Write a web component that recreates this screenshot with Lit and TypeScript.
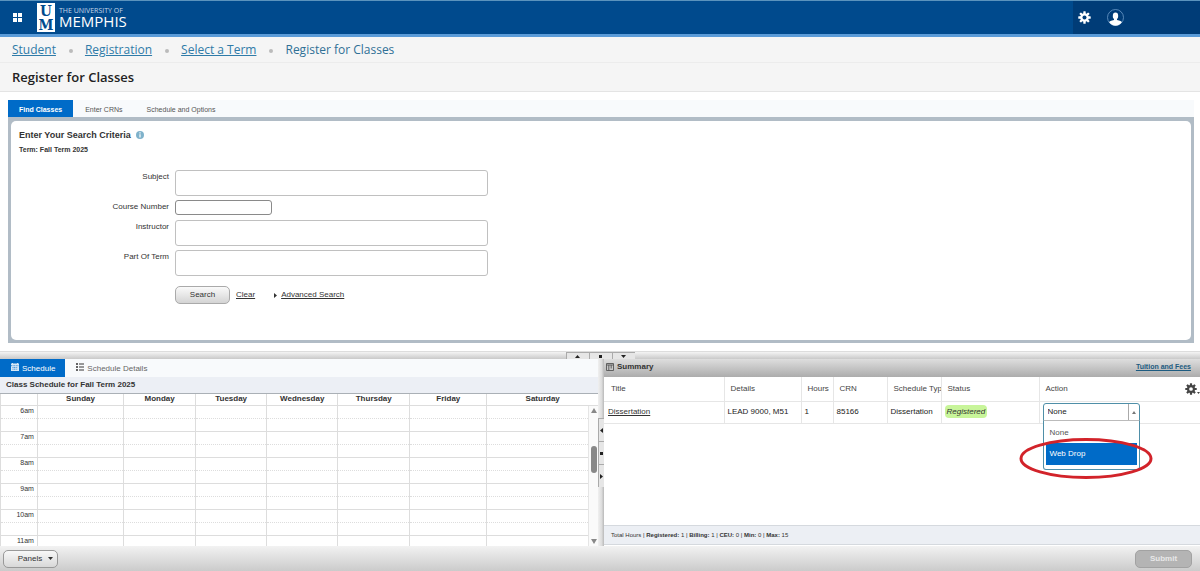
import { LitElement, html, css, svg } from "lit";
import { customElement, property, state } from "lit/decorators.js";
import { classMap } from "lit/directives/class-map.js";

const gear = (cls: string) => html`
  <svg class=${cls} viewBox="0 0 24 24" aria-hidden="true">
    ${[0, 45, 90, 135].map((a) => svg`<rect x="9.8" y="0.5" width="4.4" height="23" rx="1" transform="rotate(${a} 12 12)" fill="currentColor"></rect>`)}
    <circle cx="12" cy="12" r="6" fill="none" stroke="currentColor" stroke-width="4"></circle>
    <circle class="hole" cx="12" cy="12" r="3.7"></circle>
  </svg>
`;

@customElement("app-header")
export class AppHeader extends LitElement {
  static styles = css`
    :host {
      display: flex;
      height: 37px;
      box-sizing: border-box;
      border-top: 1px solid #5b93bd;
      border-bottom: 3px solid #5a9bd8;
      background: #004a8d;
      color: #fff;
    }
    button {
      border: 0;
      padding: 0;
      background: none;
      color: inherit;
      display: flex;
    }
    .left {
      flex: 1;
      display: flex;
      align-items: center;
      padding-left: 13px;
    }
    .apps svg {
      width: 9px;
      height: 9px;
    }
    .brand {
      display: flex;
      align-items: center;
      gap: 4px;
      margin-left: 15px;
      color: #fff;
      text-decoration: none;
    }
    .mark {
      width: 18px;
      height: 29px;
    }
    .mark text {
      font: 700 15px "DejaVu Serif Condensed", "DejaVu Serif", serif;
      fill: #004a8d;
      text-anchor: middle;
    }
    .words {
      display: flex;
      flex-direction: column;
      font-family: "Open Sans", sans-serif;
    }
    .small {
      font-size: 7px;
      line-height: 8px;
      color: #c5d6e8;
    }
    .big {
      font-size: 15px;
      line-height: 13px;
    }
    .right {
      width: 127px;
      background: #003c77;
      display: flex;
      align-items: center;
      gap: 16px;
      padding-left: 5px;
      box-sizing: border-box;
    }
    .gear {
      width: 13px;
      height: 13px;
    }
    .hole {
      fill: #003c77;
    }
    .user {
      width: 17px;
      height: 17px;
    }
  `;
  render() {
    return html`
      <div class="left">
        <button class="apps" aria-label="Applications">
          <svg viewBox="0 0 9 9" fill="#fff">
            <rect width="4" height="4"></rect><rect x="5" width="4" height="4"></rect>
            <rect y="5" width="4" height="4"></rect><rect x="5" y="5" width="4" height="4"></rect>
          </svg>
        </button>
        <a class="brand" href="#">
          <svg class="mark" viewBox="0 0 18 29" aria-hidden="true">
            <rect width="18" height="29" fill="#fff"></rect>
            <text x="9" y="13">U</text>
            <text x="9" y="27">M</text>
          </svg>
          <span class="words"><span class="small">THE UNIVERSITY OF</span><span class="big">MEMPHIS</span></span>
        </a>
      </div>
      <div class="right">
        <button aria-label="Settings">${gear("gear")}</button>
        <button aria-label="Profile">
          <svg class="user" viewBox="0 0 17 17">
            <circle cx="8.5" cy="8.5" r="8" fill="#003c77" stroke="#6d9cc9" stroke-width="0.8"></circle>
            <ellipse cx="8.5" cy="7" rx="2.7" ry="3.4" fill="#fff"></ellipse>
            <path d="M7 9h3v2c3 .5 4.500 1.200 4.800 2.300a7.600 7.600 0 0 1-12.600 0C2.500 12.200 4 11.500 7 11z" fill="#fff"></path>
          </svg>
        </button>
      </div>
    `;
  }
}

@customElement("search-panel")
export class SearchPanel extends LitElement {
  @state() private active = 0;
  static styles = css`
    :host {
      display: block;
      padding: 8px 6px 8px 8px;
      font-size: 8px;
      line-height: 10px;
    }
    button,
    input {
      font: inherit;
      color: inherit;
      box-sizing: border-box;
    }
    .tabs {
      display: flex;
      background: #f8fafc;
      height: 17px;
    }
    .tab {
      border: 0;
      background: none;
      padding: 3px 12px 0;
      font-size: 7px;
      color: #555;
    }
    .tab.on {
      background: #006bc8;
      color: #fff;
      font-weight: 700;
      padding: 3px 11px 0;
    }
    .frame {
      background: #b1bcc6;
      padding: 4px 3px 3px;
    }
    .body {
      background: #fff;
      border-radius: 5px;
      padding: 8px 8px 36px;
    }
    h2 {
      margin: 0;
      font-size: 9px;
      line-height: 12px;
      display: flex;
      align-items: center;
      gap: 5px;
    }
    .info {
      width: 8px;
      height: 8px;
    }
    .term {
      font-size: 7px;
      font-weight: 700;
      margin: 4px 0 15px;
    }
    .form {
      display: grid;
      grid-template-columns: 150px minmax(0, 313px);
      gap: 5px 6px;
    }
    label {
      text-align: right;
      padding-top: 2px;
    }
    input {
      height: 26px;
      width: 100%;
      border: 1px solid #c0c0c0;
      border-radius: 3px;
      margin-bottom: -1px;
    }
    input.short {
      width: 97px;
      height: 15px;
      border-color: #8a8a8a;
      margin: 0;
    }
    .actions {
      grid-column: 2;
      display: flex;
      align-items: center;
      margin-top: 6px;
    }
    .search {
      width: 55px;
      height: 18px;
      border: 1px solid #aaa;
      border-radius: 5px;
      background: linear-gradient(#fafafa, #d4d4d4);
      margin-right: 6px;
      padding: 0;
    }
    a {
      color: #333;
    }
    .adv {
      margin-left: 19px;
      display: flex;
      align-items: center;
      gap: 4px;
    }
    .adv svg {
      width: 3px;
      height: 5px;
    }
  `;
  render() {
    const field = (id: string, text: string, short = false) => html`
      <label for=${id}>${text}</label>
      <input id=${id} type="text" class=${classMap({ short })} />
    `;
    return html`
      <div class="tabs" role="tablist">
        ${["Find Classes", "Enter CRNs", "Schedule and Options"].map(
          (t, i) => html`<button role="tab" aria-selected=${i === this.active} class=${classMap({ tab: true, on: i === this.active })}
            @click=${() => (this.active = i)}>${t}</button>`,
        )}
      </div>
      <div class="frame">
        <div class="body">
          <h2>
            Enter Your Search Criteria
            <svg class="info" viewBox="0 0 8 8" aria-hidden="true">
              <circle cx="4" cy="4" r="4" fill="#7fb2cb"></circle>
              <path d="M4 1.300v1.200M4 3.200v3.300" stroke="#fff" stroke-width="1.200"></path>
            </svg>
          </h2>
          <div class="term">Term: Fall Term 2025</div>
          <div class="form">
            ${field("subject", "Subject")} ${field("course", "Course Number", true)}
            ${field("instructor", "Instructor")} ${field("part", "Part Of Term")}
            <div class="actions">
              <button class="search">Search</button>
              <a href="#">Clear</a>
              <span class="adv">
                <svg viewBox="0 0 3 5" aria-hidden="true"><path d="M0 0l3 2.500L0 5z" fill="#333"></path></svg>
                <a href="#">Advanced Search</a>
              </span>
            </div>
          </div>
        </div>
      </div>
    `;
  }
}

@customElement("pane-splitter")
export class PaneSplitter extends LitElement {
  @property({ type: Boolean, reflect: true }) vertical = false;
  static styles = css`
    :host {
      display: flex;
      justify-content: center;
      height: 8px;
      box-sizing: border-box;
      border-top: 1px solid #ddd;
      background: linear-gradient(#f4f4f4, #c9c9c9);
    }
    :host([vertical]) {
      height: auto;
      flex-direction: column;
      border: 0;
      background: linear-gradient(90deg, #f0f0f0, #ddd 60%, #b9b9b9);
    }
    button {
      width: 23px;
      height: 7px;
      padding: 0;
      border: solid #aaa;
      border-width: 1px 0 0 1px;
      background: #e6e6e6;
      display: flex;
      align-items: center;
      justify-content: center;
    }
    :host([vertical]) button {
      width: 6px;
      height: 23px;
    }
    svg {
      width: 5px;
      height: 5px;
      fill: #222;
      flex: none;
    }
  `;
  render() {
    const paths = this.vertical
      ? ["M4 0v5L1 2.500z", "M1 1h3v3H1z", "M1 0v5l3-2.500z"]
      : ["M0 4h5L2.500 1z", "M1 1h3v3H1z", "M0 1h5L2.500 4z"];
    const names = ["Collapse", "Reset", "Expand"];
    return html`${paths.map((d, i) => html`<button aria-label=${names[i]}><svg viewBox="0 0 5 5"><path d=${d}></path></svg></button>`)}`;
  }
}

@customElement("schedule-pane")
export class SchedulePane extends LitElement {
  static styles = css`
    :host {
      display: flex;
      flex-direction: column;
      min-height: 0;
      min-width: 0;
      background: #fff;
      font-size: 8px;
      line-height: 10px;
    }
    .tabs {
      display: flex;
      height: 18px;
      flex: none;
      background: #f8fafc;
    }
    .tab {
      font: inherit;
      border: 0;
      background: none;
      color: #666;
      display: flex;
      align-items: center;
      gap: 3px;
      padding: 2px 10px 0 11px;
    }
    .tab.on {
      background: #006bc8;
      color: #fff;
    }
    .tab svg {
      width: 8px;
      height: 8px;
      margin-bottom: 4px;
    }
    h3 {
      margin: 0;
      flex: none;
      height: 16px;
      font-size: 8px;
      line-height: 16px;
      padding-left: 6px;
      background: #eceff5;
      border-bottom: 1px solid #aab0b6;
    }
    table {
      width: 100%;
      border-collapse: collapse;
      table-layout: fixed;
    }
    th,
    td {
      padding: 0;
      height: 12px;
      border: 0 solid #ddd;
      border-width: 0 0 1px 1px;
      vertical-align: top;
    }
    .head {
      flex: none;
      padding-right: 10px;
    }
    .head th {
      height: 11px;
    }
    .hour td,
    .hour th {
      border-bottom: 1px dotted #ddd;
    }
    .hour th {
      font-size: 7px;
      font-weight: 400;
      text-align: right;
      padding-right: 3px;
    }
    .scroller {
      flex: 1 1 0;
      min-height: 0;
      display: flex;
    }
    .view {
      flex: 1;
      overflow: hidden;
      min-width: 0;
    }
    .bar {
      width: 9px;
      border-left: 1px solid #e5e5e5;
      background: #fafafa;
      display: flex;
      flex-direction: column;
      align-items: center;
      padding: 2px 0;
    }
    .bar svg {
      width: 6px;
      height: 5px;
      flex: none;
      fill: #888;
    }
    .track {
      flex: 1;
      padding-top: 33px;
    }
    .thumb {
      width: 6px;
      height: 27px;
      border-radius: 3px;
      background: #888;
    }
  `;
  render() {
    const days = ["Sunday", "Monday", "Tuesday", "Wednesday", "Thursday", "Friday", "Saturday"];
    const hours = ["6am", "7am", "8am", "9am", "10am", "11am"];
    const cols = html`<colgroup>${[37, 86, 72, 71, 71, 72, 77, 102].map((w) => html`<col style="width:${(w / 588) * 100}%" />`)}</colgroup>`;
    const headCols = html`<colgroup>${[37, 86, 72, 71, 71, 72, 77, 111].map((w) => html`<col style="width:${(w / 597) * 100}%" />`)}</colgroup>`;
    return html`
      <div class="tabs" role="tablist">
        <button class="tab on" role="tab">
          <svg viewBox="0 0 8 8" aria-hidden="true">
            <path d="M0 1h8v7H0zM1.500 0v2M6.500 0v2" fill="#d7e8f6" stroke="#d7e8f6"></path>
            <path d="M0 2.700h8M1.500 4.500h5M1.500 6.200h5" stroke="#006bc8" stroke-width=".7" stroke-dasharray="1 .6"></path>
          </svg>
          Schedule
        </button>
        <button class="tab" role="tab">
          <svg viewBox="0 0 8 8" aria-hidden="true">
            <path d="M0 1h2M0 4h2M0 7h2" stroke="#333" stroke-width="1.600"></path>
            <path d="M3 1h5M3 4h5M3 7h5" stroke="#777" stroke-width="1.500"></path>
          </svg>
          Schedule Details
        </button>
      </div>
      <h3>Class Schedule for Fall Term 2025</h3>
      <table class="head">${headCols}<thead><tr><th></th>${days.map((d) => html`<th scope="col">${d}</th>`)}</tr></thead></table>
      <div class="scroller">
        <div class="view">
          <table>
            ${cols}
            <tbody>
              ${hours.map(
                (h) => html`
                  <tr class="hour"><th scope="row">${h}</th>${days.map(() => html`<td></td>`)}</tr>
                  <tr class="half"><td></td>${days.map(() => html`<td></td>`)}</tr>
                `,
              )}
            </tbody>
          </table>
        </div>
        <div class="bar">
          <svg viewBox="0 0 6 5"><path d="M0 5h6L3 0z"></path></svg>
          <div class="track"><div class="thumb"></div></div>
          <svg viewBox="0 0 6 5"><path d="M0 0h6L3 5z"></path></svg>
        </div>
      </div>
    `;
  }
}

@customElement("summary-pane")
export class SummaryPane extends LitElement {
  static styles = css`
    :host {
      display: flex;
      flex-direction: column;
      min-width: 0;
      background: #fff;
      font-size: 8px;
      line-height: 10px;
    }
    .title {
      display: flex;
      align-items: center;
      height: 18px;
      box-sizing: border-box;
      padding: 0 9px 2px 2px;
      gap: 3px;
      background: linear-gradient(#dedede, #acacac);
    }
    .title h3 {
      flex: 1;
      margin: 0;
      font-size: 8px;
    }
    .title svg {
      width: 8px;
      height: 8px;
    }
    .title a {
      font-size: 7px;
      font-weight: 700;
      color: #1d5b80;
    }
    table {
      width: 100%;
      table-layout: fixed;
      border-collapse: collapse;
    }
    th,
    td {
      box-sizing: border-box;
      border: solid #e6e6e6;
      border-width: 0 0 1px 1px;
      text-align: left;
      white-space: nowrap;
      vertical-align: middle;
    }
    th {
      height: 24px;
      padding: 0 0 0 6px;
      font-weight: 400;
      overflow: hidden;
      color: #444;
    }
    td {
      height: 22px;
      padding: 0 0 0 3px;
      color: #222;
    }
    th:first-child,
    td:first-child {
      border-left: 0;
      padding-left: 7px;
    }
    td:first-child {
      padding-left: 4px;
    }
    td a {
      color: #333;
    }
    .last {
      display: flex;
      align-items: center;
      justify-content: space-between;
    }
    .cfg {
      border: 0;
      background: none;
      padding: 0;
      display: flex;
      align-items: flex-end;
      color: #444;
    }
    .gear {
      width: 12px;
      height: 12px;
    }
    .hole {
      fill: #fff;
    }
    .dot {
      width: 3px;
      height: 4px;
    }
    .badge {
      background: #c8f59a;
      border-radius: 4px;
      padding: 2px;
      font-style: italic;
      color: #333;
    }
    .combo {
      position: relative;
      width: 97px;
    }
    select {
      display: block;
      appearance: none;
      box-sizing: border-box;
      width: 100%;
      height: 18px;
      border: 1px solid #4f8fa8;
      border-radius: 3px 3px 0 0;
      padding: 0 4px;
      background: #fff;
      font: inherit;
      color: #222;
    }
    .arrow {
      position: absolute;
      right: 1px;
      top: 1px;
      width: 10px;
      height: 16px;
      border-left: 1px solid #aaa;
      display: flex;
      align-items: center;
      justify-content: center;
      pointer-events: none;
    }
    .arrow svg {
      width: 4px;
      height: 3px;
    }
    .menu {
      position: absolute;
      top: 17px;
      left: 0;
      right: 0;
      margin: 0;
      padding: 4px 2px;
      list-style: none;
      background: #fff;
      border: 1px solid #4f8fa8;
      border-top-color: #bbb;
      border-radius: 0 0 3px 3px;
    }
    .menu li {
      padding: 0 4px;
      line-height: 21px;
      height: 22px;
      color: #555;
    }
    .menu li:first-child {
      height: 18px;
      line-height: 15px;
    }
    .menu .on {
      background: #006bc8;
      color: #fff;
    }
    .ring {
      position: absolute;
      left: -24px;
      top: 34px;
      width: 134px;
      height: 43px;
      pointer-events: none;
    }
    .totals {
      margin-top: auto;
      margin-bottom: 1px;
      border: solid #d5d9de;
      border-width: 1px 0;
      background: #eceff4;
      font-size: 6px;
      line-height: 18px;
      padding-left: 7px;
    }
  `;
  render() {
    const heads = ["Title", "Details", "Hours", "CRN", "Schedule Type", "Status"];
    return html`
      <div class="title">
        <svg viewBox="0 0 8 8" aria-hidden="true">
          <path d="M.5.5h7v7h-7zM.5 2h7M2.800 2v5.500M5.200 2v3.500" fill="#c8c8c8" stroke="#555" stroke-width=".9"></path>
        </svg>
        <h3>Summary</h3>
        <a href="#">Tuition and Fees</a>
      </div>
      <table>
        <colgroup>${[120, 77, 32, 54, 54, 98, 161].map((w) => html`<col style="width:${(w / 596) * 100}%" />`)}</colgroup>
        <thead>
          <tr>
            ${heads.map((h) => html`<th scope="col">${h}</th>`)}
            <th scope="col">
              <div class="last">Action
                <button class="cfg" aria-label="Columns">${gear("gear")}<svg class="dot" viewBox="0 0 3 4"><path d="M0 1h3L1.500 3z" fill="#444"></path></svg></button>
              </div>
            </th>
          </tr>
        </thead>
        <tbody>
          <tr>
            <td><a href="#">Dissertation</a></td>
            <td>LEAD 9000, M51</td>
            <td>1</td>
            <td>85166</td>
            <td>Dissertation</td>
            <td><span class="badge">Registered</span></td>
            <td>
              <div class="combo">
                <select aria-label="Action"><option>None</option><option>Web Drop</option></select>
                <span class="arrow"><svg viewBox="0 0 4 3"><path d="M0 3h4L2 0z" fill="#777"></path></svg></span>
                <ul class="menu"><li>None</li><li class="on">Web Drop</li></ul>
                <svg class="ring" viewBox="0 0 134 43" aria-hidden="true">
                  <ellipse cx="67" cy="21.500" rx="65" ry="19" fill="none" stroke="#d2232a" stroke-width="3"></ellipse>
                </svg>
              </div>
            </td>
          </tr>
        </tbody>
      </table>
      <div class="totals">
        Total Hours | <b>Registered:</b> 1 | <b>Billing:</b> 1 | <b>CEU:</b> 0 | <b>Min:</b> 0 | <b>Max:</b> 15
      </div>
    `;
  }
}

@customElement("app-root")
export class AppRoot extends LitElement {
  static styles = css`
    :host {
      display: flex;
      flex-direction: column;
      min-height: 100vh;
      background: #fff;
      color: #333;
      font-family: "Liberation Sans", Arial, sans-serif;
    }
    .crumbs {
      display: flex;
      align-items: center;
      height: 25px;
      padding-left: 12px;
      background: #f5f5f5;
      border-bottom: 1px solid #ececec;
      font: 12px/24px "Open Sans", sans-serif;
      color: #2f7095;
    }
    .crumbs a {
      color: #2f7ba8;
    }
    .sep {
      width: 4px;
      height: 4px;
      border-radius: 50%;
      background: #bbb;
      margin: 2px 12px 0 13px;
    }
    h1 {
      margin: 0;
      padding-left: 12px;
      background: #f5f5f5;
      border-bottom: 1px solid #e4e4e4;
      font: 600 13px/28px "Open Sans", sans-serif;
      color: #222;
    }
    .panes {
      flex: 1;
      min-height: 187px;
      display: grid;
      grid-template-columns: 598fr 6px 596fr;
    }
    footer {
      display: flex;
      justify-content: space-between;
      align-items: center;
      height: 25px;
      padding: 0 8px 0 3px;
      background: linear-gradient(#f2f2f2, #cbcbcb);
    }
    footer button {
      box-sizing: border-box;
      height: 18px;
      border: 1px solid #999;
      border-radius: 5px;
      font: 8px "Liberation Sans", sans-serif;
      color: #333;
      padding: 0;
      display: flex;
      align-items: center;
      justify-content: center;
    }
    .panels {
      width: 55px;
      gap: 6px;
      padding-left: 10px;
      background: linear-gradient(#f8f8f8, #d8d8d8);
    }
    .panels svg {
      width: 5px;
      height: 3px;
    }
    footer .submit {
      width: 57px;
      background: #b4b4b4;
      border-color: #a2a2a2;
      color: #e8e8e8;
      font-weight: 700;
    }
  `;
  render() {
    return html`
      <app-header></app-header>
      <nav class="crumbs" aria-label="Breadcrumb">
        <a href="#">Student</a><span class="sep"></span>
        <a href="#">Registration</a><span class="sep"></span>
        <a href="#">Select a Term</a><span class="sep"></span>
        <span>Register for Classes</span>
      </nav>
      <h1>Register for Classes</h1>
      <search-panel></search-panel>
      <pane-splitter></pane-splitter>
      <main class="panes">
        <schedule-pane></schedule-pane>
        <pane-splitter vertical></pane-splitter>
        <summary-pane></summary-pane>
      </main>
      <footer>
        <button class="panels">Panels <svg viewBox="0 0 5 3" aria-hidden="true"><path d="M0 0h5L2.500 3z" fill="#333"></path></svg></button>
        <button class="submit">Submit</button>
      </footer>
    `;
  }
}
